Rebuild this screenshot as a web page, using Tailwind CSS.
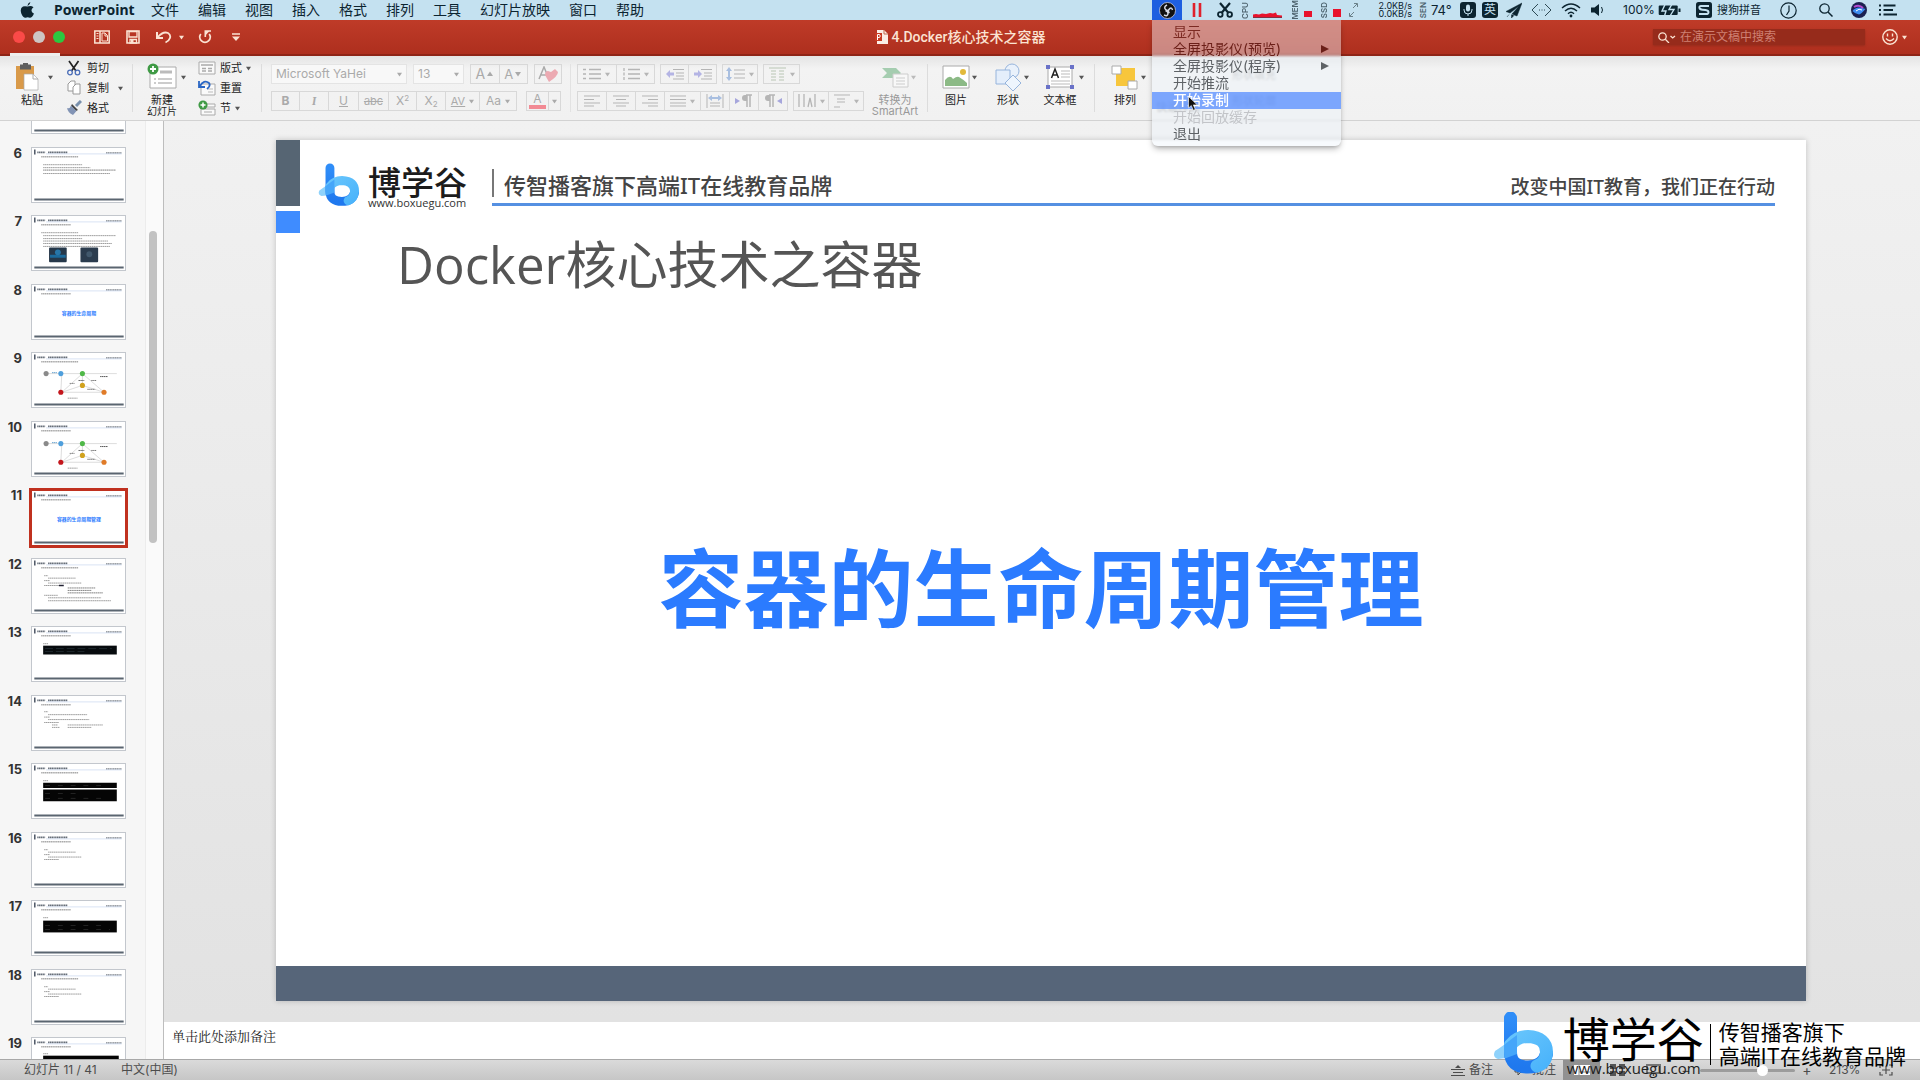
<!DOCTYPE html>
<html lang="zh-CN">
<head>
<meta charset="utf-8">
<title>4.Docker核心技术之容器</title>
<script src="https://cdn.jsdelivr.net/npm/@tailwindcss/browser@4"></script>
</head>
<body class="relative flex h-screen flex-col overflow-hidden bg-[#f4f4f4] font-['Inter','Noto_Sans_CJK_SC',sans-serif] text-[11px] text-[#222]">

<!-- shared symbols -->
<svg class="absolute h-0 w-0">
  <defs>
    <linearGradient id="lg1" x1="0" y1="0" x2="0" y2="1"><stop offset="0" stop-color="#2f8df8"/><stop offset="1" stop-color="#1f78ee"/></linearGradient>
    <linearGradient id="lg2" x1="0" y1="0" x2="1" y2="1"><stop offset="0" stop-color="#66c4fc"/><stop offset="1" stop-color="#4bb4fb"/></linearGradient>
  </defs>
  <symbol id="caret" viewBox="0 0 6 6"><path d="M0 1h6L3 5.500z" fill="currentColor"/></symbol>
  <symbol id="arrowr" viewBox="0 0 8 8"><path d="M0 0l8 4-8 4z" fill="currentColor"/></symbol>
  <symbol id="plus" viewBox="0 0 12 12"><circle cx="6" cy="6" r="5.500" fill="#3f9a45"/><path d="M6 3v6M3 6h6" stroke="#fff" stroke-width="1.800"/></symbol>
  <symbol id="logo" viewBox="0 0 60 62">
    <path d="M2 39Q10 34 20 26v18Q12 47 5 47Q-1 45 2 39z" fill="#8fd2fb"/>
    <path d="M17.500 6v34Q17.500 55 35 55Q50 55 53.500 42" fill="none" stroke="url(#lg1)" stroke-width="13" stroke-linecap="round"/>
    <path d="M17.500 33Q24 24.500 35 24.500Q53.500 25.500 53.500 40Q53 51 44 54" fill="none" stroke="url(#lg2)" stroke-width="13" stroke-linecap="round"/>
    <path d="M11 33Q17 28 24 23v19L12 46.500Q11 44 11 40z" fill="#45a6fa"/>
  </symbol>
  <symbol id="thumbhead" viewBox="0 0 94 55">
    <path d="M2.500 1.500v5" stroke="#3c4656" stroke-width="1.400"/>
    <path d="M5 4.500h8M16 4.500h20" stroke="#666e79" stroke-width="1.700" stroke-dasharray="1.400 .4"/>
    <path d="M75 5h16" stroke="#7d838b" stroke-width="1.200" stroke-dasharray="1.400 .4"/>
    <path d="M14 6h77" stroke="#b0c6e8" stroke-width=".5"/>
    <path d="M2 52.500h91" stroke="#5a6570" stroke-width="2"/>
  </symbol>
</svg>

<!-- system menu bar -->
<header class="relative z-20 flex h-5 shrink-0 items-center bg-[#c4e1f0] text-sm leading-5 text-[#0c2430]">
  <nav class="flex items-center gap-[19px] pl-5 whitespace-nowrap">
    <svg class="h-4 w-[15px]" viewBox="0 0 15 16"><path d="M10.300 0Q10.500 2.500 7.600 3.900Q7.400 1.300 10.300 0zM7.600 4.600Q11 3 13.500 5.300Q10.500 7.500 12 10Q12.700 11 14 11.500Q12 16 9.800 15.800Q7.700 14.800 5.600 15.800Q3.200 16 1.300 11.500Q-.4 6 3 4.500Q5 3.800 7.600 4.600z" fill="currentColor"/></svg>
    <a href="#" class="w-[78px] text-[14px] font-bold font-['Noto_Sans']">PowerPoint</a>
    <a href="#">文件</a><a href="#">编辑</a><a href="#">视图</a><a href="#">插入</a><a href="#">格式</a><a href="#">排列</a><a href="#">工具</a><a href="#">幻灯片放映</a><a href="#">窗口</a><a href="#">帮助</a>
  </nav>
  <div class="ml-auto flex h-5 items-center pr-[23px] whitespace-nowrap">
    <div class="relative flex h-5 w-[30px] items-center justify-center bg-[#1e5fe0]">
      <svg class="h-[17px] w-[17px]" viewBox="0 0 17 17"><circle cx="8.500" cy="8.500" r="8" fill="#111" stroke="#dde" stroke-width=".7"/><path d="M8 3q-4 2-1 5q2 1 3 0M13.500 8q-1-4-4 0q-.5 2 1 3M5 13q4 2 4-2q-.5-2-2.500-2" fill="none" stroke="#d5d9e4" stroke-width="1.500"/></svg>
      <!-- recorder menu -->
      <ul class="absolute top-full left-0 w-[189px] rounded-b-md bg-[#eef3fb]/45 pt-1 pb-[3px] text-sm leading-[15px] text-[#5e6266] shadow-md shadow-black/25 backdrop-blur-[1px]">
        <li class="h-[17px] px-[21px] text-[#7c2a22]">显示</li>
        <li class="flex h-[17px] items-center justify-between pr-3 pb-0.5 pl-[21px] text-[#6b1f18]">全屏投影仪(预览)<svg class="h-2 w-2"><use href="#arrowr"/></svg></li>
        <li class="flex h-[17px] items-center justify-between pr-3 pb-0.5 pl-[21px]">全屏投影仪(程序)<svg class="h-2 w-2"><use href="#arrowr"/></svg></li>
        <li class="h-[17px] px-[21px]">开始推流</li>
        <li class="h-[17px] bg-[#5f92ff]/80 px-[21px] font-medium text-white">开始录制</li>
        <li class="h-[17px] px-[21px] text-[#c2c4c8]">开始回放缓存</li>
        <li class="h-[17px] px-[21px]">退出</li>
      </ul>
      <svg class="absolute top-[96px] left-[36px] h-[15px] w-[10px]" viewBox="0 0 10 15"><path d="M.5.5v11.500l2.800-2.500 2 4.800 2-.9-2-4.500h4z" fill="#111" stroke="#fff" stroke-width=".6"/></svg>
    </div>
    <svg class="ml-2.5 h-4 w-2.5" viewBox="0 0 10 16"><path d="M2 1v14M8 1v14" stroke="#e0202c" stroke-width="2.600"/></svg>
    <svg class="ml-[15px] h-4 w-4" viewBox="0 0 16 16"><path d="M3 1l8.500 10M13 1L4.500 11" stroke="#0c2430" stroke-width="2.200" fill="none"/><circle cx="3.300" cy="12.500" r="2.300" fill="none" stroke="#0c2430" stroke-width="1.800"/><circle cx="12.700" cy="12.500" r="2.300" fill="none" stroke="#0c2430" stroke-width="1.800"/></svg>
    <span class="ml-2 w-2 rotate-180 text-[8px] leading-[8px] font-semibold text-[#4d636e] [writing-mode:vertical-rl]">CPU</span>
    <svg class="ml-1 h-4 w-[29px]" viewBox="0 0 29 16"><path d="M0 15.500v-3l3-.5 3 .5 3-1 4 .5 4-1 3 .5 3-1 1 2.500 5 .5v2z" fill="#e8122c"/><path d="M0 15.500h29" stroke="#6a2030" stroke-width=".8"/></svg>
    <span class="ml-[9px] w-2 rotate-180 text-[8px] leading-[8px] font-semibold text-[#4d636e] [writing-mode:vertical-rl]">MEM</span>
    <span class="mt-2 ml-[5px] h-1.5 w-2 bg-[#e8122c]"></span>
    <span class="ml-2 w-2 rotate-180 text-[8px] leading-[8px] font-semibold text-[#4d636e] [writing-mode:vertical-rl]">SSD</span>
    <span class="mt-1.5 ml-[5px] h-2 w-2 bg-[#e8122c]"></span>
    <svg class="ml-2 h-4 w-[9px]" viewBox="0 0 9 16"><path d="M4 6l4-4M5 1.500h3.500V5M5 10l-4 4M.5 11v3.500H4" fill="none" stroke="#6a8089" stroke-width="1"/></svg>
    <span class="ml-3.5 flex w-10 flex-col items-end text-[9px] leading-[8px]"><span>2.0KB/s</span><span>0.0KB/s</span></span>
    <span class="ml-[7px] w-2 rotate-180 text-[8px] leading-[8px] font-semibold text-[#4d636e] [writing-mode:vertical-rl]">SEN</span>
    <span class="ml-1 w-[25px] text-[13px]">74°</span>
    <svg class="ml-1 h-4 w-4" viewBox="0 0 16 16"><rect width="16" height="16" rx="3" fill="#0c2430"/><rect x="6" y="2.500" width="4" height="7" rx="2" fill="#c4e1f0"/><path d="M4 7v1a4 4 0 0 0 8 0V7M8 12v2" fill="none" stroke="#c4e1f0"/></svg>
    <span class="ml-1.5 h-4 w-4 rounded-[3px] bg-[#0c2430] text-center text-[12px] leading-4 text-[#c4e1f0]">英</span>
    <svg class="ml-2 h-4 w-4" viewBox="0 0 16 16"><path d="M16 1L0 9.500l4 1.500L13 4 6 12l5 2zM5.500 12.500V16l2.500-2.500M1 15l2-2.500" fill="#0c2430" stroke="#0c2430" stroke-width=".5"/></svg>
    <svg class="ml-[9px] h-4 w-[21px]" viewBox="0 0 21 16"><path d="M7 2L1 8l6 6M14 2l6 6-6 6" fill="none" stroke="#2e4954"/><path d="M8 8h1M10.500 8h1M13 8h1" stroke="#2e4954"/></svg>
    <svg class="ml-[9px] h-4 w-5" viewBox="0 0 20 16"><path d="M1 6q9-8 18 0M4 9q6-5.500 12 0M7 11.700q3-2.700 6 0" fill="none" stroke="#0c2430" stroke-width="1.400"/><circle cx="10" cy="14" r="1.400" fill="#0c2430"/></svg>
    <svg class="ml-2.5 h-4 w-3.5" viewBox="0 0 14 16"><path d="M0 5.500h3.500L8 2v12L3.500 10.500H0z" fill="#0c2430"/><path d="M10.500 5q2 3 0 6" fill="none" stroke="#0c2430"/></svg>
    <span class="ml-[18px] w-8 text-[12px]">100%</span>
    <svg class="ml-[3px] h-4 w-6" viewBox="0 0 24 16"><rect x=".7" y="3.500" width="19" height="9.500" rx="1" fill="#0c2430"/><path d="M21.500 6.500v3.500" stroke="#0c2430" stroke-width="2"/><path d="M7 2.500L4 9h4l-1.500 5M14 2l-3 5.500h5L12 14" fill="none" stroke="#c4e1f0" stroke-width="1.400"/></svg>
    <svg class="ml-3.5 h-4 w-4" viewBox="0 0 16 16"><rect width="16" height="16" rx="2.500" fill="#0c2430"/><path d="M13 4H5Q3 4 3.500 6q.3 1.500 3 1.700l3 .4q3 .4 3 2.200T10 12H3" fill="none" stroke="#c4e1f0" stroke-width="2"/></svg>
    <span class="ml-[5px] w-[46px] text-[11px]">搜狗拼音</span>
    <svg class="ml-[17px] h-[17px] w-[17px]" viewBox="0 0 17 17"><circle cx="8.500" cy="8.500" r="7.700" fill="none" stroke="#0c2430" stroke-width="1.200"/><path d="M9 3.500V9l-2.500 4" fill="none" stroke="#0c2430" stroke-width="1.200"/></svg>
    <svg class="ml-[22px] h-3.5 w-3.5" viewBox="0 0 14 14"><circle cx="5.500" cy="5.500" r="4.700" fill="none" stroke="#0c2430" stroke-width="1.300"/><path d="M9 9l4.500 4.500" stroke="#0c2430" stroke-width="1.500"/></svg>
    <svg class="ml-[18px] h-4 w-4" viewBox="0 0 16 16"><circle cx="8" cy="8" r="8" fill="#1b2050"/><path d="M1.500 9q4-6 13-2Q10 12 8 12.500 4 12 1.500 9z" fill="#3d8bf0"/><path d="M3 5q5-3 9 1" stroke="#b14ad0" stroke-width="2" fill="none"/><path d="M5 9q3-3 6-1" stroke="#fff" fill="none"/></svg>
    <svg class="ml-3 h-3.5 w-[18px]" viewBox="0 0 18 14"><path d="M0 2.500h2M4.500 2.500h12M0 7h2M4.500 7h9.500M0 11.500h2M4.500 11.500H18" stroke="#0c2430" stroke-width="1.800"/></svg>
  </div>
</header>

<!-- window title bar -->
<div class="relative flex h-9 shrink-0 items-center border-b-2 border-[#8e2416] bg-linear-to-b from-[#bf3b28] to-[#ae2f1e] text-[#fbe3d3]">
  <div class="flex items-center pl-[13px]">
    <button aria-label="关闭" class="h-3 w-3 rounded-full bg-[#fb4a48]"></button>
    <button aria-label="最小化" class="ml-2 h-3 w-3 rounded-full bg-[#cdc6c4]"></button>
    <button aria-label="缩放" class="ml-2 h-3 w-3 rounded-full bg-[#2bc840]"></button>
    <svg class="ml-[29px] h-3.5 w-4" viewBox="0 0 16 14"><path d="M.8 1h14.400v12H.8zM6 1v12" fill="none" stroke="currentColor" stroke-width="1.500"/><path d="M2.500 3.500h2M2.500 6h2M2.500 8.500h2" stroke="currentColor"/><path d="M8 3h3l2.500 2.500V11H8zM11 3v3h2.500" fill="none" stroke="currentColor"/></svg>
    <svg class="ml-4 h-3.5 w-3.5" viewBox="0 0 14 14"><path d="M1 1h12v12H1z" fill="none" stroke="currentColor" stroke-width="1.600"/><path d="M3 1.500h8V7H3zM4 9.500h6.500V13H4z" fill="none" stroke="currentColor" stroke-width="1.300"/><path d="M5 10h2.500v3H5z" fill="currentColor"/></svg>
    <svg class="ml-4 h-3.5 w-4" viewBox="0 0 16 14"><path d="M1 2v6h6" fill="none" stroke="currentColor" stroke-width="2"/><path d="M1.500 7.500Q7 1 12 3q3 2 2 5-1 3-4.500 4.500" fill="none" stroke="currentColor" stroke-width="1.800"/></svg>
    <svg class="ml-[7px] h-[5px] w-[5px]"><use href="#caret"/></svg>
    <svg class="ml-[14px] h-3.5 w-3.5" viewBox="0 0 14 14"><path d="M2.800 4A5.200 5.200 0 1 0 11.200 4" fill="none" stroke="currentColor" stroke-width="1.800"/><path d="M6.500 1h6.500M7.300 1v6" fill="none" stroke="currentColor" stroke-width="1.600"/><path d="M7 1h4.500L7 6z" fill="currentColor"/></svg>
    <svg class="ml-5 h-2.5 w-2" viewBox="0 0 8 10"><path d="M0 2h8" stroke="currentColor" stroke-width="1.500"/><path d="M0 4.500h8L4 9z" fill="currentColor"/></svg>
  </div>
  <h1 class="absolute inset-x-0 flex items-center justify-center gap-1 font-['Roboto','Noto_Sans_CJK_SC',sans-serif] text-sm font-medium"><svg class="h-3.5 w-[13px]" viewBox="0 0 13 14"><path d="M2 0h7l4 4v10H2z" fill="#fbeee6"/><path d="M9 0v4h4" fill="none" stroke="#c06a50"/><path d="M0 3h7v8H0z" fill="#c83a22"/><path d="M2.500 10V4.500h2q1.500 1.500 0 3h-2" fill="none" stroke="#fff"/></svg><span>4.Docker核心技术之容器</span></h1>
  <div class="relative ml-auto flex items-center pr-[13px]">
    <label class="flex h-4 w-[212px] items-center bg-[#962b1b] pl-[5px] shadow-xs shadow-[#962b1b]">
      <svg class="h-[11px] w-[18px]" viewBox="0 0 18 11"><circle cx="4.500" cy="4.500" r="3.700" fill="none" stroke="currentColor" stroke-width="1.300"/><path d="M7.300 7.300L11 11M12.500 4l2.200 2L17 4" fill="none" stroke="currentColor" stroke-width="1.300"/></svg>
      <input type="text" aria-label="搜索" placeholder="在演示文稿中搜索" class="ml-1 w-40 bg-transparent text-[12px] leading-4 outline-none placeholder:text-[#cf8073]">
    </label>
    <svg class="ml-[17px] h-4 w-4" viewBox="0 0 16 16"><circle cx="8" cy="8" r="7.200" fill="none" stroke="currentColor" stroke-width="1.400"/><path d="M5.500 4.500v3M10.500 4.500v3M4 9.500q4 4.500 8 0" fill="none" stroke="currentColor" stroke-width="1.400"/></svg>
    <svg class="ml-1 h-[5px] w-[5px]"><use href="#caret"/></svg>
  </div>
</div>

<!-- ribbon -->
<div class="flex h-[65px] shrink-0 border-b border-[#d2d2d2] bg-linear-to-b from-[#e4e4e4] via-[#f3f3f3] via-20% to-[#f1f1f1] whitespace-nowrap">
  <button class="relative flex w-[66px] pt-[7px] pl-[15px] text-left before:absolute before:-top-[3px] before:left-[10px] before:h-[3px] before:w-[50px] before:bg-[#eee]">
    <span class="flex w-8 flex-col">
      <svg class="h-7 w-6" viewBox="0 0 24 28"><path d="M1 3h18v23H1z" fill="#d99a4a"/><path d="M5 1.500h11v5H5zM8 0h5v3H8z" fill="#5f5f5f"/><path d="M9 11h9l5 5v11H9z" fill="#fff" stroke="#aaa" stroke-width=".7"/><path d="M18 11v5h5" fill="none" stroke="#aaa"/></svg>
      <span class="mt-1 ml-1.5 leading-[11px]">粘贴</span>
    </span>
    <svg class="mt-3 ml-px h-[5px] w-[5px] text-[#555]"><use href="#caret"/></svg>
  </button>
  <div class="flex w-[66px] flex-col pt-0.5">
    <button class="flex h-5 items-center gap-[5px]"><svg class="h-4 w-4" viewBox="0 0 16 16"><path d="M3 1l7 10M12.500 1l-7 10" stroke="#222" stroke-width="1.700"/><circle cx="4" cy="12.500" r="2.300" fill="none" stroke="#4a6db8" stroke-width="1.300"/><circle cx="11.500" cy="12.500" r="2.300" fill="none" stroke="#4a6db8" stroke-width="1.300"/></svg>剪切</button>
    <button class="flex h-5 items-center gap-[5px]"><svg class="h-4 w-4" viewBox="0 0 16 16"><path d="M2 4l3-3h4v10H2z" fill="#fff" stroke="#999"/><path d="M7 7l3-3h4v10H7z" fill="#fff" stroke="#999"/></svg>复制<svg class="ml-1 h-[5px] w-[5px] text-[#555]"><use href="#caret"/></svg></button>
    <button class="flex h-5 items-center gap-[5px]"><svg class="h-4 w-4" viewBox="0 0 16 16"><path d="M15 1l-5 5" stroke="#7890ad" stroke-width="3"/><path d="M6 4l6 6-2 1-5-5z" fill="#444"/><path d="M5 5.500l5.500 5.500L7 15Q2 13 1 8q3 1 4-2.500z" fill="#8294b5"/></svg>格式</button>
  </div>
  <div class="my-2 w-px bg-[#dcdcdc]"></div>
  <button class="flex w-[65px] pt-[7px] pl-[11px]">
    <span class="flex w-9 flex-col items-center">
      <svg class="h-7 w-[30px]" viewBox="0 0 30 28"><path d="M3 4h26v21H3z" fill="#fff" stroke="#aaa"/><path d="M13 9h12" stroke="#bbb" stroke-width="3"/><path d="M7 16h2M11 16h14M7 20h2M11 20h14" stroke="#999"/><use href="#plus" width="12" height="12"/></svg>
      <span class="mt-1 leading-[11px]">新建<br><span class="text-[10px]">幻灯片</span></span>
    </span>
    <svg class="mt-3 ml-px h-[5px] w-[5px] text-[#555]"><use href="#caret"/></svg>
  </button>
  <div class="flex w-[63px] flex-col pt-0.5">
    <button class="flex h-5 items-center gap-1"><svg class="h-4 w-[18px]" viewBox="0 0 18 16"><path d="M1 2h16v12H1z" fill="#fafafa" stroke="#aaa"/><path d="M3 5h12M4 8.500h4M4 11h4M10 8.500h4M10 11h4" stroke="#aaa" stroke-width="1.400"/></svg>版式<svg class="h-[5px] w-[5px] text-[#555]"><use href="#caret"/></svg></button>
    <button class="flex h-5 items-center gap-1"><svg class="h-4 w-[18px]" viewBox="0 0 18 16"><path d="M3 4h14v11H3z" fill="#fafafa" stroke="#aaa"/><path d="M10 9h5M10 12h5" stroke="#bbb"/><path d="M1 1v6h6M1.500 6.500Q6-1 11 3q2 3-2 6" fill="none" stroke="#2a66c4" stroke-width="1.800"/></svg>重置</button>
    <button class="flex h-5 items-center gap-1"><svg class="h-4 w-[18px]" viewBox="0 0 18 16"><path d="M4 4h13v3H4zM3 9h14v6H3z" fill="#fafafa" stroke="#aaa"/><path d="M6 12h8" stroke="#aaa"/><use href="#plus" width="10" height="10"/></svg>节<svg class="h-[5px] w-[5px] text-[#555]"><use href="#caret"/></svg></button>
  </div>
  <div class="my-2 w-px bg-[#dcdcdc]"></div>

  <!-- font controls -->
  <div class="flex w-[308px] flex-col gap-[7px] pt-2 pl-[9px] text-[#aaa]">
    <div class="flex h-5">
      <label class="relative flex w-[136px] items-center border border-[#e4e4e4] bg-[#f8f8f8]"><select aria-label="字体" class="w-full appearance-none pl-1 text-[12px] leading-4 outline-none"><option>Microsoft YaHei</option></select><svg class="absolute right-1 h-[5px] w-[5px]"><use href="#caret"/></svg></label>
      <label class="relative ml-1.5 flex w-[51px] items-center border border-[#e4e4e4] bg-[#f8f8f8]"><select aria-label="字号" class="w-full appearance-none pl-1 text-[12px] leading-4 outline-none"><option>13</option></select><svg class="absolute right-1 h-[5px] w-[5px]"><use href="#caret"/></svg></label>
      <div class="ml-1.5 flex w-[58px] divide-x divide-[#d8d8d8] border border-[#d8d8d8] leading-[18px]"><button class="flex flex-1 items-center justify-center gap-px text-sm leading-4">A<svg class="h-1.5 w-2 rotate-180"><use href="#caret"/></svg></button><button class="flex flex-1 items-center justify-center gap-px text-[13px] leading-4">A<svg class="h-1.5 w-2"><use href="#caret"/></svg></button></div>
      <button aria-label="清除格式" class="ml-1.5 flex w-7 items-center justify-center border border-[#d8d8d8]"><svg class="h-4 w-5" viewBox="0 0 20 16"><path d="M1 13L6 1l5 12M3 9h6" fill="none" stroke="#aaa" stroke-width="1.500"/><path d="M7 9q0-4 3-4l3 1 4-3 3 3q0 4-9 10z" fill="#ecaab2"/></svg></button>
    </div>
    <div class="flex h-5">
      <div class="flex w-[246px] divide-x divide-[#d8d8d8] border border-[#d8d8d8] text-center text-[12px] leading-[18px]">
        <button class="w-7 font-bold">B</button><button class="w-[29px] font-serif font-bold italic">I</button><button class="w-[30px] underline">U</button><button class="w-[30px] text-[11px] line-through">abc</button><button class="flex w-7 items-start justify-center">X<span class="text-[8px] leading-3">2</span></button><button class="flex w-[29px] items-end justify-center">X<span class="text-[8px] leading-3">2</span></button>
        <button class="flex w-[34px] items-center justify-center gap-1 text-[11px]"><span class="underline">AV</span><svg class="h-[5px] w-[5px]"><use href="#caret"/></svg></button><button class="flex flex-1 items-center justify-center gap-1">Aa<svg class="h-[5px] w-[5px]"><use href="#caret"/></svg></button>
      </div>
      <div class="ml-[9px] flex w-[35px] divide-x divide-[#d8d8d8] border border-[#d8d8d8]"><button class="flex w-[22px] items-center justify-center"><span class="h-4 w-[17px] border-b-4 border-[#f28a94] text-[12px] leading-[12px]">A</span></button><button aria-label="字体颜色" class="flex flex-1 items-center justify-center"><svg class="h-[5px] w-[5px]"><use href="#caret"/></svg></button></div>
    </div>
  </div>
  <div class="my-2 w-px bg-[#e2e2e2]"></div>

  <!-- paragraph controls -->
  <div class="flex w-[295px] flex-col gap-[7px] pt-2 pl-1.5 text-[#b5b5b5]">
    <div class="flex h-5">
      <div class="flex w-[78px] divide-x divide-[#d8d8d8] border border-[#d8d8d8]">
        <button class="flex flex-1 items-center justify-center gap-1"><svg class="h-3.5 w-[18px]" viewBox="0 0 18 14"><path d="M6 2.500h12M6 7h12M6 11.500h12M0 2.500h3M0 7h3M0 11.500h3" stroke="currentColor" stroke-width="1.300"/></svg><svg class="h-[5px] w-[5px]"><use href="#caret"/></svg></button>
        <button class="flex flex-1 items-center justify-center gap-1"><svg class="h-3.5 w-[18px]" viewBox="0 0 18 14"><path d="M6 2.500h12M6 7h12M6 11.500h12M2 1v3M2 5.500v3M2 10v3" stroke="currentColor" stroke-width="1.300"/></svg><svg class="h-[5px] w-[5px]"><use href="#caret"/></svg></button>
      </div>
      <div class="ml-[5px] flex w-[57px] divide-x divide-[#d8d8d8] border border-[#d8d8d8]">
        <button class="flex flex-1 items-center justify-center"><svg class="h-3.5 w-[18px]" viewBox="0 0 18 14"><path d="M7 2.500h11M10 6h8M10 9h8M7 12h11" stroke="currentColor"/><path d="M0 7l4-4v2.500h4v3H4V11z" fill="#b4b4e4"/></svg></button>
        <button class="flex flex-1 items-center justify-center"><svg class="h-3.5 w-[18px]" viewBox="0 0 18 14"><path d="M7 2.500h11M10 6h8M10 9h8M7 12h11" stroke="currentColor"/><path d="M8 7L4 3v2.500H0v3h4V11z" fill="#b4b4e4"/></svg></button>
      </div>
      <button class="ml-[5px] flex w-9 items-center justify-center gap-1 border border-[#d8d8d8]"><svg class="h-3.5 w-[19px]" viewBox="0 0 19 14"><path d="M8 3h11M8 7h11M8 11h11" stroke="currentColor" stroke-width="1.200"/><path d="M3 0l3 4H4v6h2l-3 4-3-4h2V4H0z" fill="#a9bfe0"/></svg><svg class="h-[5px] w-[5px]"><use href="#caret"/></svg></button>
      <button class="ml-[5px] flex w-[37px] items-center justify-center gap-1 border border-[#d8d8d8]"><svg class="h-3.5 w-[17px]" viewBox="0 0 17 14"><path d="M0 1h17M2 4h5M2 7h5M2 10h5M2 13h5M10 4h5M10 7h5M10 10h5M10 13h5" stroke="#b9c6b4"/></svg><svg class="h-[5px] w-[5px]"><use href="#caret"/></svg></button>
    </div>
    <div class="flex h-5">
      <div class="flex w-[211px] divide-x divide-[#d8d8d8] border border-[#d8d8d8]">
        <button class="flex w-[29px] items-center justify-center"><svg class="h-3 w-4" viewBox="0 0 16 12"><path d="M0 1h16M0 4.500h10M0 8h16M0 11h10" stroke="currentColor"/></svg></button>
        <button class="flex w-[29px] items-center justify-center"><svg class="h-3 w-4" viewBox="0 0 16 12"><path d="M0 1h16M3 4.500h10M0 8h16M3 11h10" stroke="currentColor"/></svg></button>
        <button class="flex w-[29px] items-center justify-center"><svg class="h-3 w-4" viewBox="0 0 16 12"><path d="M0 1h16M6 4.500h10M0 8h16M6 11h10" stroke="currentColor"/></svg></button>
        <button class="flex w-9 items-center justify-center gap-1"><svg class="h-3 w-4" viewBox="0 0 16 12"><path d="M0 1h16M0 4.500h16M0 8h16M0 11h16" stroke="currentColor"/></svg><svg class="h-[5px] w-[5px]"><use href="#caret"/></svg></button>
        <button class="flex w-[29px] items-center justify-center"><svg class="h-3.5 w-[18px]" viewBox="0 0 18 14"><path d="M1 0v14M17 0v14M4 9h10M4 12h10" stroke="currentColor"/><path d="M2 4l4-3v2h6V1l4 3-4 3V5H6v2z" fill="#a9bfe0"/></svg></button>
        <button class="flex w-[29px] items-center justify-center"><svg class="h-3.5 w-[18px]" viewBox="0 0 18 14"><path d="M0 4l5 3-5 3z" fill="#a6a6dc"/><path d="M12 1h-2q-3 0-3 3t3 3h2z" fill="currentColor"/><path d="M17 1h-6M12 1v12M15 1v12" fill="none" stroke="currentColor" stroke-width="1.500"/></svg></button>
        <button class="flex flex-1 items-center justify-center"><svg class="h-3.5 w-[18px]" viewBox="0 0 18 14"><path d="M18 4l-5 3 5 3z" fill="#a6a6dc"/><path d="M6 1H4Q1 1 1 4t3 3h2z" fill="currentColor"/><path d="M11 1H5M6 1v12M9 1v12" fill="none" stroke="currentColor" stroke-width="1.500"/></svg></button>
      </div>
      <div class="ml-[5px] flex w-[71px] divide-x divide-[#d8d8d8] border border-[#d8d8d8]">
        <button class="flex flex-1 items-center justify-center gap-1"><svg class="h-3.5 w-[18px]" viewBox="0 0 18 14"><path d="M1 0v13M6 0v13M10 13l2-9 2 9M17 0v13" fill="none" stroke="currentColor" stroke-width="1.300"/></svg><svg class="h-[5px] w-[5px]"><use href="#caret"/></svg></button>
        <button class="flex flex-1 items-center justify-center gap-1"><svg class="h-3.5 w-4" viewBox="0 0 16 14"><path d="M0 1h16M3 5h8M3 8h8M0 13h6" stroke="currentColor"/></svg><svg class="h-[5px] w-[5px]"><use href="#caret"/></svg></button>
      </div>
    </div>
  </div>
  <button class="flex w-[61px] pt-[7px] pl-1.5 text-[#999]">
    <span class="flex w-[46px] flex-col items-center">
      <svg class="h-7 w-7" viewBox="0 0 28 28"><path d="M1 5h14l5 5-5 5H1l5-5z" fill="#a5cdb0"/><path d="M12 11h15v13H12z" fill="#f8f8f8" stroke="#ccc"/><path d="M15 15h9M15 18h9M15 21h9" stroke="#ccc"/></svg>
      <span class="mt-1 text-[11px] leading-[11px]">转换为<br>SmartArt</span>
    </span>
    <svg class="mt-3 -ml-[7px] h-[5px] w-[5px] text-[#bbb]"><use href="#caret"/></svg>
  </button>
  <div class="my-2 w-px bg-[#dcdcdc]"></div>
  <button class="flex w-[52px] pt-[7px] pl-3">
    <span class="flex w-8 flex-col items-center"><svg class="h-7 w-7" viewBox="0 0 28 28"><path d="M1 3h26v22H1z" fill="#fff" stroke="#aaa"/><path d="M3 23v-6q5-6 8-1 4-3 6-2 5 3 8 6v3z" fill="#8cba86"/><circle cx="21" cy="9" r="3" fill="#e2b93a"/></svg><span class="mt-1 leading-[11px]">图片</span></span>
    <svg class="mt-3 h-[5px] w-[5px] text-[#555]"><use href="#caret"/></svg>
  </button>
  <button class="flex w-[52px] pt-[7px] pl-3">
    <span class="flex w-8 flex-col items-center"><svg class="h-7 w-7" viewBox="0 0 28 28"><circle cx="18" cy="8" r="7" fill="#e9f1fb" stroke="#96b4dc"/><path d="M2 7h14v14H2z" fill="#e4eefb" stroke="#96b4dc"/><path d="M19 12l8 8-8 8-8-8z" fill="#eef5fd" stroke="#96b4dc"/></svg><span class="mt-1 leading-[11px]">形状</span></span>
    <svg class="mt-3 h-[5px] w-[5px] text-[#555]"><use href="#caret"/></svg>
  </button>
  <button class="flex w-[62px] pt-[7px] pl-2.5">
    <span class="flex w-9 flex-col items-center"><svg class="h-7 w-7" viewBox="0 0 28 28"><path d="M2 4h24v20H2z" fill="#fff" stroke="#aaa"/><path d="M0 2h4v4H0zM24 2h4v4h-4zM0 22h4v4H0zM24 22h4v4h-4z" fill="#6a72c8"/><path d="M5.500 15l3.500-9 3.500 9M7 12h4" fill="none" stroke="#222" stroke-width="1.500"/><path d="M15 8h9M15 11h9M15 14h9M5 18h19M5 21h19" stroke="#bbb"/></svg><span class="mt-1 leading-[11px]">文本框</span></span>
    <svg class="mt-3 ml-px h-[5px] w-[5px] text-[#555]"><use href="#caret"/></svg>
  </button>
  <div class="my-2 w-px bg-[#dcdcdc]"></div>
  <button class="flex w-[58px] pt-[7px] pl-3.5">
    <span class="flex w-8 flex-col items-center"><svg class="h-7 w-7" viewBox="0 0 28 28"><path d="M5 5h19v18H5z" fill="#f7c63c"/><path d="M1 3h9v8H1zM17 18h9v8h-9z" fill="#fff" stroke="#aaa"/></svg><span class="mt-1 leading-[11px]">排列</span></span>
    <svg class="mt-3 h-[5px] w-[5px] text-[#555]"><use href="#caret"/></svg>
  </button>
  <button class="pt-[39px] pl-[3px] leading-[11px] text-[#999]" disabled>快速样式</button>
  <div class="flex flex-col gap-3 pt-3 pl-8 text-[#bbb]"><button class="leading-[14px]" disabled>形状填充</button><button class="leading-[14px] text-[#999]" disabled>形状轮廓</button></div>
</div>

<!-- work area -->
<main class="flex min-h-0 flex-1">
  <aside class="flex w-[164px] shrink-0 border-r border-[#bdbdbd] bg-[#f6f6f6]">
    <div class="flex-1 overflow-hidden">
      <ol id="thumbs" class="-mt-[43px] grid h-[1028px] auto-rows-fr"></ol>
    </div>
    <div class="w-[18px] border-l border-[#ececec] bg-[#fafafa] pt-[110px] pl-[3px]"><div class="h-[312px] w-2 rounded-full bg-[#c2c2c2]"></div></div>
  </aside>
  <div class="flex min-w-0 flex-1 flex-col">
    <div class="flex min-h-0 flex-1 bg-linear-to-b from-[#f1f1f1] to-[#e2e2e2] pt-[19px] pr-[114px] pb-[21px] pl-28">
      <article class="flex flex-1 flex-col bg-white shadow-[0_0_6px_rgba(0,0,0,0.2)]">
        <div class="flex min-h-0 flex-1">
          <div class="flex w-6 flex-col gap-[5px]"><div class="h-[66px] bg-[#566573]"></div><div class="h-[22px] bg-[#3f8cff]"></div></div>
          <div class="flex flex-1 flex-col">
            <div class="flex pt-[23px] pr-[31px] pl-[18px] whitespace-nowrap">
              <svg class="h-[44px] w-[41px]"><use href="#logo"/></svg>
              <div class="ml-[9px] flex w-[98px] flex-col text-[#1c1c1c]"><span class="mt-1 text-[33px] leading-8 font-medium">博学谷</span><span class="font-['Open_Sans'] text-[11px] leading-2 text-[#333]">www.boxuegu.com</span></div>
              <div class="ml-[26px] flex h-[43px] flex-1 items-center border-b-3 border-[#5590e2] font-['Noto_Sans','Noto_Sans_CJK_SC',sans-serif] font-medium text-[#444]">
                <span class="h-[28px] w-0.5 bg-[#777]"></span>
                <span class="ml-2.5 pt-1 text-[22px]">传智播客旗下高端IT在线教育品牌</span>
                <span class="ml-auto pt-2 text-[19px]">改变中国IT教育，我们正在行动</span>
              </div>
            </div>
            <h2 class="mt-[23px] pl-[97px] font-['Open_Sans','Noto_Sans_CJK_SC',sans-serif] text-[51px] leading-[68px] text-[#555]">Docker核心技术之容器</h2>
            <p class="mt-[236px] pr-6 text-center font-['Noto_Sans_CJK_SC',sans-serif] text-[85px] leading-[100px] font-bold text-[#2b7bff]">容器的生命周期管理</p>
          </div>
        </div>
        <div class="h-[35px] bg-[#566579]"></div>
      </article>
    </div>
    <div class="h-[37px] bg-white px-2 pt-1.5"><textarea aria-label="备注" rows="1" class="block h-5 w-full resize-none font-['Noto_Serif_CJK_SC','Noto_Sans_CJK_SC',serif] text-[13px] leading-4 outline-none">单击此处添加备注</textarea></div>
  </div>
</main>

<!-- status bar -->
<footer class="flex h-[21px] shrink-0 items-center border-t border-[#a8a8a8] bg-linear-to-b from-[#dadada] to-[#c6c6c6] text-[12px] whitespace-nowrap text-[#4c4c4c]">
  <span class="w-24 pl-6">幻灯片 11 / 41</span>
  <span class="ml-[25px]">中文(中国)</span>
  <div class="ml-auto flex h-full items-center pr-[27px]">
    <button class="flex items-center gap-1"><svg class="h-3 w-3.5" viewBox="0 0 14 12"><path d="M0 5.500h14M2 8.500h10M0 11.500h14" stroke="currentColor"/><path d="M4 4l3-3 3 3z" fill="currentColor"/></svg>备注</button>
    <button class="ml-[21px] flex items-center gap-1"><svg class="h-3 w-3.5" viewBox="0 0 14 12"><path d="M1 1h12v7H7l-3 3V8H1z" fill="none" stroke="currentColor"/></svg>批注</button>
    <button aria-label="普通视图" class="ml-[7px] flex h-full w-[37px] items-center justify-center bg-[#919191]"><svg class="h-3 w-4" viewBox="0 0 16 12"><path d="M0 1h16v10H0z" fill="#fff"/><path d="M5 1v10M5 8h11" stroke="#919191"/></svg></button>
    <button aria-label="浏览视图" class="ml-2.5"><svg class="block h-3 w-[15px]" viewBox="0 0 15 12"><path d="M0 0h6v5H0zM9 0h6v5H9zM0 7h6v5H0zM9 7h6v5H9z" fill="#555"/></svg></button>
    <button aria-label="阅读视图" class="ml-[21px]"><svg class="block h-3 w-[15px]" viewBox="0 0 15 12"><path d="M0 1h15M1 2v7h13V2M7.500 9v3" fill="none" stroke="#555" stroke-width="1.500"/></svg></button>
    <button aria-label="缩小" class="ml-[20px] w-2.5 text-sm leading-4">−</button>
    <input type="range" aria-label="缩放" value="68" class="ml-[9px] h-[3px] w-[95px] appearance-none rounded-full bg-[#9c9c9c] [&::-webkit-slider-thumb]:h-[11px] [&::-webkit-slider-thumb]:w-[11px] [&::-webkit-slider-thumb]:appearance-none [&::-webkit-slider-thumb]:rounded-full [&::-webkit-slider-thumb]:bg-white">
    <button aria-label="放大" class="ml-[7px] w-2.5 text-sm leading-4">+</button>
    <span class="ml-[17px] w-[30px] text-[12px]">213%</span>
    <button aria-label="适应窗口" class="ml-5"><svg class="block h-3 w-3.5" viewBox="0 0 14 12"><path d="M1 4V1h3M10 1h3v3M13 8v3h-3M4 11H1V8M7 2v8M3 6h8" fill="none" stroke="currentColor" stroke-width="1.200"/></svg></button>
  </div>
</footer>

<!-- brand overlay -->
<div class="pointer-events-none absolute right-3.5 bottom-[6px] z-10 flex items-start whitespace-nowrap text-black">
  <svg class="h-[62px] w-[60px]"><use href="#logo"/></svg>
  <div class="ml-2.5 flex w-[142px] flex-col"><span class="mt-[6px] text-[47px] leading-[44px]">博学谷</span><span class="ml-1 font-['Open_Sans'] text-[15px] leading-3 text-[#222]">www.boxuegu.com</span></div>
  <div class="mt-3 ml-[5px] h-[41px] w-px bg-black"></div>
  <div class="mt-[9px] ml-2 text-[21px] leading-6">传智播客旗下<br>高端IT在线教育品牌</div>
</div>

<script>
const line = (x, y, w, c = '#9c9c9c') => `<path d="M${x} ${y}h${w}" stroke="${c}" stroke-width="1" stroke-dasharray="1.500 .4"/>`;
const dot = (x, y, c) => `<circle cx="${x}" cy="${y}" r="2.600" fill="${c}"/>`;
const blue = (x, t) => `<text x="${x}" y="31" font-size="5" font-weight="700" fill="#2b7bff">${t}</text>`;
const graph = dy => `<path d="M16 21h70M30 21L29 40M30 40L51 21 73 40M30 40L51 33 73 40M30 40h43M51 21v12" transform="translate(0 ${dy})" fill="none" stroke="#c5c5c5" stroke-width=".6"/>` +
  dot(14, 21 + dy, '#8a8a8a') + dot(29, 21 + dy, '#4f9fdc') + dot(51, 21 + dy, '#4fb848') + dot(51, 33 + dy, '#d1a21e') + dot(29, 40 + dy, '#c4161c') + dot(73, 40 + dy, '#e07b28') +
  line(69, 24 + dy, 8, '#555') + line(36, 46 + dy, 10) + line(56, 37 + dy, 8, '#777') + line(47, 28 + dy, 6, '#666') + line(38, 31 + dy, 5, '#888') + line(60, 28 + dy, 5, '#777') + line(20, 20 + dy, 5, '#6ba5d0');
const code = line(12, 17, 4) + line(16, 19.5, 28) + line(12, 22, 6) + line(16, 24.5, 34) + line(12, 27, 15);
const slides = [
  [5, ''],
  [6, line(11, 17, 40) + line(11, 20, 48) + line(11, 22.5, 74, '#808080') + line(11, 26, 68)],
  [7, line(9, 17, 38) + line(11, 20, 74) + line(11, 23, 40) + line(11, 25.5, 66) + line(11, 28, 70) + line(11, 31, 68) + '<rect x="17" y="32" width="18" height="15" rx="1" fill="#26384a"/><path d="M18 41h16" stroke="#1b6a9c" stroke-width="3"/><circle cx="26" cy="37" r="3" fill="#2776a8"/><rect x="49" y="32" width="18" height="15" rx="1" fill="#2b3c4e"/><circle cx="58" cy="39" r="3" fill="#41586c"/>'],
  [8, blue(30, '容器的生命周期')],
  [9, graph(0)],
  [10, graph(1)],
  [11, blue(25, '容器的生命周期管理')],
  [12, code + '<path d="M27 27h5" stroke="#223" stroke-width="1.500"/>' + line(36, 29.5, 28, '#808080') + line(36, 32, 24, '#808080') + line(36, 34.5, 36, '#808080') + line(12, 37, 14) + line(16, 39.5, 54) + line(16, 42.5, 64)],
  [13, line(11, 17, 5) + '<rect x="11" y="19" width="75" height="9" fill="#070b0e"/><path d="M13 22h68M13 25h40" stroke="#28353a" stroke-width=".7" stroke-dasharray="8 3"/>'],
  [14, line(12, 16, 4) + line(16, 19, 40) + line(12, 21.5, 6) + line(16, 24, 42) + line(12, 27, 15) + line(20, 29.5, 6) + line(36, 29.5, 36) + line(20, 32, 8) + line(36, 32, 24)],
  [15, line(11, 17, 5) + '<path d="M11 19h75v5.500H11zM11 26h75v12H11z" fill="#050505"/><path d="M13 22h60M13 30h36M13 35h64" stroke="#333" stroke-width=".7" stroke-dasharray="5 8"/>'],
  [16, code],
  [17, line(11, 17, 5) + '<rect x="11" y="20" width="75" height="12" fill="#050505"/><path d="M13 25h62M13 29h66" stroke="#333" stroke-width=".7" stroke-dasharray="5 8"/>'],
  [18, code],
  [19, line(11, 16, 5) + '<rect x="11" y="18" width="77" height="14" fill="#050505"/>']
];
document.getElementById('thumbs').innerHTML = slides.map(([n, body]) => `
  <li class="flex items-start">
    <span class="w-[22px] text-right text-[13px] leading-3 font-bold text-[#333]">${n}</span>
    <a href="#" aria-label="幻灯片 ${n}" class="${n === 11 ? 'ml-[7px] -mt-px border-3 border-[#c0311f] bg-white' : 'ml-[9px] border border-[#c3c7cd] bg-white'}">
      <svg class="block h-[54px] w-[93px]" viewBox="0 0 94 55"><use href="#thumbhead"/>${line(9, 9, n % 3 ? 30 : 38, '#808080')}${body}</svg>
    </a>
  </li>`).join('');
</script>
</body>
</html>
